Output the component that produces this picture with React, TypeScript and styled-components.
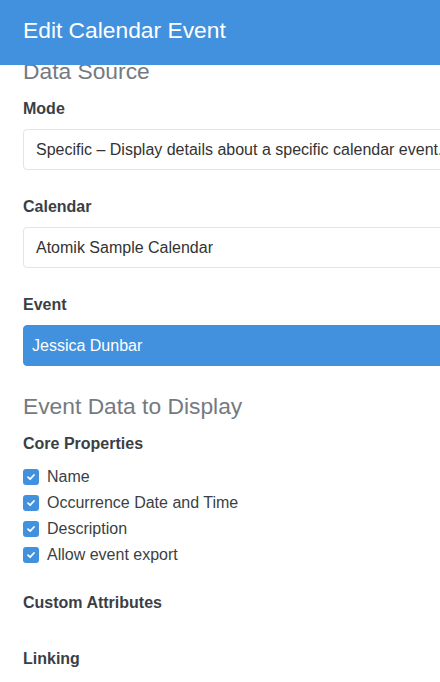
import styled, { createGlobalStyle } from 'styled-components';

const GlobalStyle = createGlobalStyle`
  html, body {
    margin: 0;
    padding: 0;
    background: #ffffff;
    overflow: hidden;
  }

  body {
    font-family: 'Liberation Sans', Arial, Helvetica, sans-serif;
    color: #3b3f45;
  }
`;

const Header = styled.header`
  position: fixed;
  top: 0;
  left: 0;
  right: 0;
  z-index: 10;
  height: 65px;
  box-sizing: border-box;
  padding: 17px 23px 0;
  background-color: #4291de;
`;

const Title = styled.h1`
  margin: 0;
  font-size: 22.8px;
  font-weight: 400;
  line-height: 1.2;
  color: #ffffff;
`;

const Content = styled.main`
  width: 520px;
  box-sizing: border-box;
  padding: 58px 0 0 23px;
  display: flex;
  flex-direction: column;
`;

const SectionTitle = styled.h2`
  margin: 0 0 15px;
  font-size: 22.8px;
  font-weight: 400;
  line-height: 26px;
  color: #757a81;
`;

const Field = styled.div`
  display: flex;
  flex-direction: column;
  gap: 10px;
  margin-bottom: 27px;
`;

const Label = styled.div<{ $gap?: number }>`
  font-size: 16px;
  font-weight: 700;
  line-height: 20px;
  color: #3b3f45;
  margin-bottom: ${p => p.$gap ?? 0}px;
`;

const Select = styled.div<{ $active?: boolean }>`
  height: 41px;
  box-sizing: border-box;
  display: flex;
  align-items: center;
  padding: 0 ${p => (p.$active ? '8px' : '12px')};
  border: 1px solid ${p => (p.$active ? '#4291de' : '#e4e4e4')};
  border-radius: 4px;
  background-color: ${p => (p.$active ? '#4291de' : '#ffffff')};
  color: ${p => (p.$active ? '#ffffff' : '#333333')};
  font-size: 16px;
  white-space: nowrap;
  overflow: hidden;
`;

const CheckList = styled.ul`
  list-style: none;
  margin: 0 0 25px;
  padding: 0;
`;

const CheckRow = styled.li`
  display: flex;
  align-items: center;
  gap: 8px;
  height: 26px;
  font-size: 16px;
  color: #3b3f45;
`;

const Box = styled.span`
  width: 16px;
  height: 16px;
  flex: none;
  border-radius: 3px;
  background-color: #4291de;
  display: flex;
  align-items: center;
  justify-content: center;
`;

const Check = () => (
  <Box>
    <svg width="10" height="10" viewBox="0 0 10 10" fill="none">
      <path
        d="M2 5.2 L4.1 7.2 L8 3"
        stroke="#ffffff"
        strokeWidth="1.8"
        strokeLinecap="round"
        strokeLinejoin="round"
      />
    </svg>
  </Box>
);

const properties = ['Name', 'Occurrence Date and Time', 'Description', 'Allow event export'];

export default function App() {
  return (
    <>
      <GlobalStyle />
      <Header>
        <Title>Edit Calendar Event</Title>
      </Header>
      <Content>
        <SectionTitle>Data Source</SectionTitle>
        <Field>
          <Label>Mode</Label>
          <Select>Specific – Display details about a specific calendar event.</Select>
        </Field>
        <Field>
          <Label>Calendar</Label>
          <Select>Atomik Sample Calendar</Select>
        </Field>
        <Field>
          <Label>Event</Label>
          <Select $active>Jessica Dunbar</Select>
        </Field>

        <SectionTitle>Event Data to Display</SectionTitle>
        <Label $gap={10}>Core Properties</Label>
        <CheckList>
          {properties.map(name => (
            <CheckRow key={name}>
              <Check />
              {name}
            </CheckRow>
          ))}
        </CheckList>
        <Label $gap={36}>Custom Attributes</Label>
        <Label>Linking</Label>
      </Content>
    </>
  );
}
